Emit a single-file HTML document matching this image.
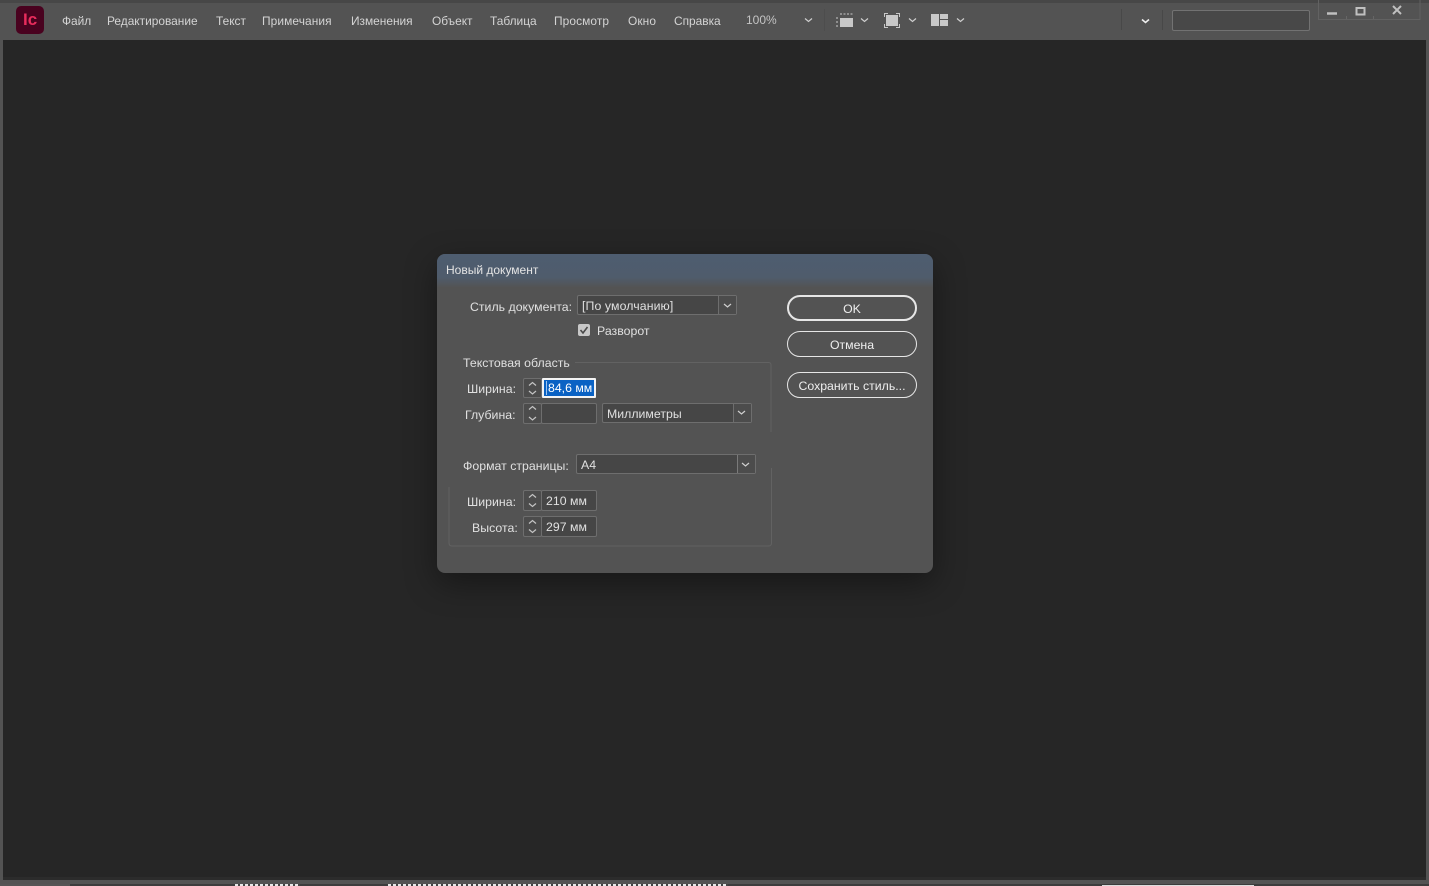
<!DOCTYPE html>
<html lang="ru"><head><meta charset="utf-8"><title>Новый документ</title>
<style>
html,body{margin:0;padding:0;width:1429px;height:886px;overflow:hidden;background:#555}
body{position:relative;font-family:"Liberation Sans",sans-serif;font-size:12px;color:#d8d8d8}
.a{position:absolute;white-space:nowrap}
.t{position:absolute;white-space:nowrap;line-height:16px}
.m{color:#d4d4d4;font-size:11.9px;top:13px}
.d{color:#e0e0e0;font-size:12.3px;letter-spacing:.02px}
.box{position:absolute;box-sizing:border-box;background:#464646;border:1px solid #6e6e6e;border-radius:2px}
.btn{position:absolute;box-sizing:border-box;left:787px;width:130px;border:1px solid #e6e6e6;border-radius:13px;color:#eee;text-align:center;font-size:12.3px}
.ic{position:absolute;overflow:visible}
.chev{fill:none;stroke:#cfcfcf;stroke-width:1.2}
</style></head>
<body>
<!-- bottom strip -->
<div class="a" style="left:0;top:884px;width:1429px;height:2px;background:#3c3c3c"></div>
<div class="a" style="left:0;top:884px;width:70px;height:2px;background:#555"></div>
<div class="a" style="left:235px;top:884px;width:65px;height:2px;background:repeating-linear-gradient(90deg,#e8e8e8 0 3px,#444 3px 5px)"></div>
<div class="a" style="left:388px;top:884px;width:340px;height:2px;background:repeating-linear-gradient(90deg,#e8e8e8 0 3px,#444 3px 5px)"></div>
<div class="a" style="left:1102px;top:885px;width:152px;height:1px;background:#ddd"></div>
<!-- frame -->
<div class="a" style="left:0;top:0;width:1429px;height:884px;background:#535353"></div>
<div class="a" style="left:0;top:0;width:1429px;height:3px;background:#474747"></div>
<div class="a" style="left:3px;top:40px;width:1423px;height:840px;background:#262626"></div>
<div class="a" style="left:3px;top:877px;width:1423px;height:3px;background:#2c2c2c"></div>

<!-- logo -->
<div class="a" style="left:16px;top:6px;width:28px;height:28px;border-radius:5px;background:#49021f"></div>
<div class="a" style="left:23px;top:11px;font-size:17px;line-height:18px;font-weight:bold;color:#e82c5c">Ic</div>

<!-- menu -->
<div class="t m" style="left:62px">Файл</div>
<div class="t m" style="left:107px">Редактирование</div>
<div class="t m" style="left:216px">Текст</div>
<div class="t m" style="left:262px;letter-spacing:.1px">Примечания</div>
<div class="t m" style="left:351px">Изменения</div>
<div class="t m" style="left:432px">Объект</div>
<div class="t m" style="left:490px">Таблица</div>
<div class="t m" style="left:554px;letter-spacing:.1px">Просмотр</div>
<div class="t m" style="left:628px;letter-spacing:.1px">Окно</div>
<div class="t m" style="left:674px">Справка</div>
<div class="t m" style="left:746px;top:12px;color:#c4c4c4;font-size:12px">100%</div>

<div class="a" style="box-sizing:border-box;left:1172px;top:10px;width:138px;height:21px;background:#484848;border:1px solid #727272;border-radius:2px"></div>

<!-- dialog -->
<div class="a" style="left:437px;top:254px;width:496px;height:319px;border-radius:8px;background:#535353;box-shadow:0 10px 32px rgba(0,0,0,.4);overflow:hidden">
 <div style="position:absolute;left:0;top:0;width:496px;height:33px;background:linear-gradient(#4e5d70,#4f5c6c 70%,#535455)"></div>
</div>
<div class="t" style="left:446px;top:262px;color:#e4e4e4;font-size:12px">Новый документ</div>

<div class="t d" style="left:470px;top:299px">Стиль документа:</div>
<div class="box" style="left:577px;top:295px;width:160px;height:20px"></div>
<div class="a" style="left:718px;top:296px;width:1px;height:18px;background:#6e6e6e"></div>
<div class="a" style="left:719px;top:296px;width:17px;height:18px;background:#4c4c4c"></div>
<div class="t d" style="left:582px;top:298px;letter-spacing:.1px">[По умолчанию]</div>

<div class="a" style="left:578px;top:324px;width:12px;height:12px;border-radius:2px;background:#c8c8c8"></div>
<div class="t d" style="left:597px;top:323px">Разворот</div>

<div class="t d" style="left:463px;top:355px">Текстовая область</div>

<div class="t d" style="left:467px;top:381px">Ширина:</div>
<div class="box" style="left:523px;top:378px;width:19px;height:20px;background:#4c4c4c"></div>
<div class="a" style="left:542px;top:378px;width:54px;height:20px;background:#f4f4f4;border-radius:1px"></div>
<div class="a" style="left:544px;top:380px;width:50px;height:16px;background:#0a62c4"></div>
<div class="t" style="left:548px;top:380px;color:#fff;font-size:12.3px">84,6 мм</div>

<div class="t d" style="left:465px;top:407px">Глубина:</div>
<div class="box" style="left:523px;top:403px;width:19px;height:21px;background:#4c4c4c"></div>
<div class="box" style="left:541px;top:403px;width:56px;height:21px"></div>
<div class="box" style="left:602px;top:403px;width:150px;height:20px"></div>
<div class="a" style="left:733px;top:404px;width:1px;height:18px;background:#6e6e6e"></div>
<div class="a" style="left:734px;top:404px;width:17px;height:18px;background:#4c4c4c"></div>
<div class="t d" style="left:607px;top:406px">Миллиметры</div>

<div class="t d" style="left:463px;top:458px">Формат страницы:</div>
<div class="box" style="left:576px;top:454px;width:180px;height:20px"></div>
<div class="a" style="left:737px;top:455px;width:1px;height:18px;background:#7a7a7a"></div>
<div class="a" style="left:738px;top:455px;width:17px;height:18px;background:#4c4c4c"></div>
<div class="t d" style="left:581px;top:457px">A4</div>

<div class="t d" style="left:467px;top:494px">Ширина:</div>
<div class="box" style="left:523px;top:490px;width:19px;height:21px;background:#4c4c4c"></div>
<div class="box" style="left:541px;top:490px;width:56px;height:21px"></div>
<div class="t d" style="left:546px;top:493px">210 мм</div>

<div class="t d" style="left:472px;top:520px">Высота:</div>
<div class="box" style="left:523px;top:516px;width:19px;height:21px;background:#4c4c4c"></div>
<div class="box" style="left:541px;top:516px;width:56px;height:21px"></div>
<div class="t d" style="left:546px;top:519px">297 мм</div>

<div class="btn" style="top:295px;height:26px;line-height:24px;border-width:2px;border-radius:13px">OK</div>
<div class="btn" style="top:331px;height:26px;line-height:26px">Отмена</div>
<div class="btn" style="top:372px;height:26px;line-height:26px">Сохранить стиль...</div>

<!-- icons & outlines on top -->
<svg class="ic" style="left:0;top:0" width="1429" height="886">
 <g class="chev">
  <path d="M805 18.500l3.500 3 3.500-3"/>
  <path d="M861 18.500l3.500 3 3.500-3"/>
  <path d="M909 18.500l3.500 3 3.500-3"/>
  <path d="M957 18.500l3.500 3 3.500-3"/>
  <path d="M1142 19.500l3.500 3 3.500-3" stroke="#eee" stroke-width="1.600"/>
 </g>
 <path d="M824.500 9v22" stroke="#4d4d4d"/>
 <!-- screen mode icon -->
 <rect x="840" y="18" width="13" height="9" fill="#c8c8c8"/>
 <path d="M840 14h13M836 18h3M836 22h3M836 26h3" stroke="#c8c8c8" stroke-dasharray="2 1.500" fill="none"/>
 <!-- fit icon -->
 <rect x="886" y="15" width="12" height="11" fill="#c8c8c8"/>
 <path d="M884.500 17v-3.500h3.500M896 13.500h3.500v3.500M899.500 24v3.500h-3.500M888 27.500h-3.500v-3.500" stroke="#c8c8c8" fill="none"/>
 <!-- arrange -->
 <rect x="931" y="14" width="8" height="12" fill="#c8c8c8"/>
 <rect x="940" y="14" width="8" height="5" fill="#c8c8c8"/>
 <rect x="940" y="20" width="8" height="6" fill="#c8c8c8"/>
 <!-- separators -->
 <path d="M1121.500 9v21M1162.500 10v20" stroke="#484848"/>
 <!-- window controls -->
 <path d="M1318.500 0v19.500h101.500V0" stroke="#626262" fill="none"/>
 <path d="M1346.500 16v3M1373.500 16v3" stroke="#666"/>
 <path d="M1327 13.500h10" stroke="#c0c0c0" stroke-width="2.500"/>
 <rect x="1356.500" y="8" width="8" height="6.500" stroke="#c0c0c0" stroke-width="2" fill="none"/>
 <path d="M1393 6l8 8M1401 6l-8 8" stroke="#c0c0c0" stroke-width="2"/>
 <!-- group outlines -->
 <path d="M575 362.500h193.500q2.500 0 2.500 2.500v67" stroke="#626262" fill="none"/>
 <path d="M771.500 468v75q0 3-3 3H452q-3 0-3-3v-56" stroke="#626262" fill="none"/>
 <!-- checkbox tick -->
 <path d="M580.500 330l2.500 3 4.500-6" stroke="#4a4a4a" stroke-width="1.600" fill="none"/>
 <!-- text cursor in selected field -->
 <path d="M546.500 381v14" stroke="#9cc4f0"/>
 <g class="chev">
  <path d="M724 304l3.500 3 3.500-3"/>
  <path d="M738 411l3.500 3 3.500-3"/>
  <path d="M742 463l3.500 3 3.500-3"/>
  <g stroke="#c4c4c4">
   <path d="M529 385.500l3.500-3 3.500 3M529 391l3.500 3 3.500-3"/>
   <path d="M529 409.500l3.500-3 3.500 3M529 417l3.500 3 3.500-3"/>
   <path d="M529 497.500l3.500-3 3.500 3M529 503.500l3.500 3 3.500-3"/>
   <path d="M529 523.500l3.500-3 3.500 3M529 529.500l3.500 3 3.500-3"/>
  </g>
 </g>
</svg>
</body></html>
